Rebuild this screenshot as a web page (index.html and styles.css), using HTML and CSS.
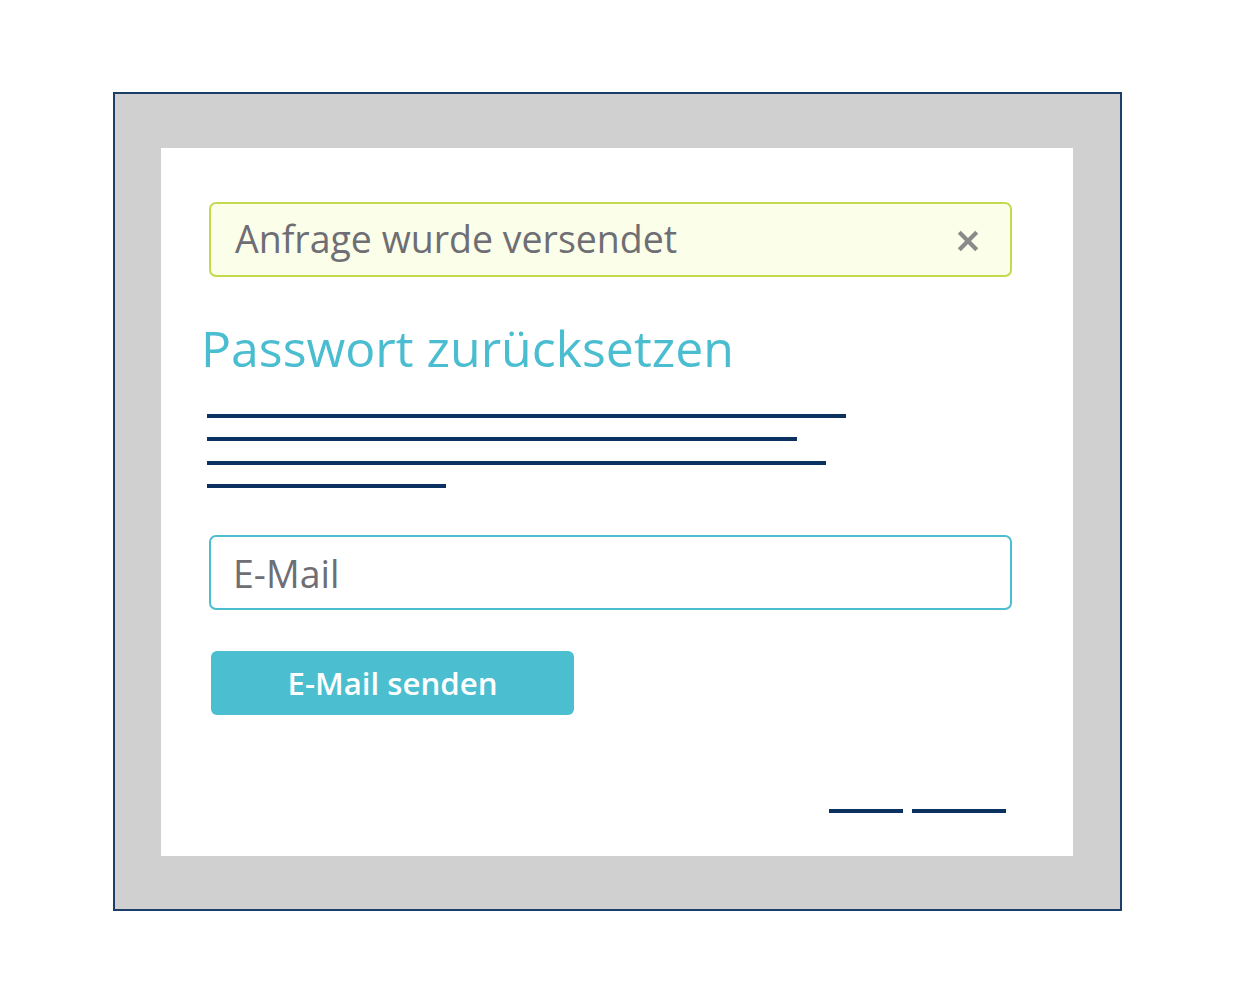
FILE: index.html
```html
<!DOCTYPE html>
<html lang="de">
<head>
<meta charset="utf-8">
<title>Passwort zurücksetzen</title>
<link rel="stylesheet" href="styles.css">
</head>
<body>
<div class="frame">
  <div class="panel">
    <div class="alert">
      <span class="alert-text">Anfrage wurde versendet</span>
      <svg class="close" width="24" height="24" viewBox="0 0 24 24" aria-hidden="true">
        <path d="M2.5 2.5 L21.5 21.5 M21.5 2.5 L2.5 21.5" stroke="#8a8a8a" stroke-width="4.6" fill="none"/>
      </svg>
    </div>
    <h1 class="title">Passwort zurücksetzen</h1>
    <div class="text-lines">
      <div class="tline" style="width:639px"></div>
      <div class="tline" style="width:590px"></div>
      <div class="tline" style="width:619px"></div>
      <div class="tline" style="width:239px"></div>
    </div>
    <input class="email" type="text" placeholder="E-Mail">
    <button class="send" type="button">E-Mail senden</button>
    <div class="footer-links">
      <div class="dash dash-a"></div>
      <div class="dash dash-b"></div>
    </div>
  </div>
</div>
</body>
</html>
```
FILE: styles.css
```css
html, body {
  margin: 0;
  padding: 0;
  background: #ffffff;
}
body {
  font-family: "Open Sans", "Liberation Sans", sans-serif;
  padding-top: 92px;
  padding-left: 113px;
}
.frame {
  box-sizing: border-box;
  width: 1009px;
  height: 819px;
  border: 2px solid #1b3f69;
  background: #d0d0d0;
  padding: 54px 47px 53px 46px;
}
.panel {
  box-sizing: border-box;
  width: 912px;
  height: 708px;
  background: #ffffff;
  padding-top: 54px;
  padding-left: 46px;
  display: flex;
  flex-direction: column;
  align-items: flex-start;
}
.alert {
  box-sizing: border-box;
  width: 803px;
  height: 75px;
  margin-left: 2px;
  border: 2px solid #c4d94c;
  border-radius: 7px;
  background: #fbfee9;
  display: flex;
  align-items: center;
  justify-content: space-between;
  padding: 0 31px 0 24px;
}
.alert-text {
  font-size: 37.5px;
  line-height: 38px;
  color: #6e6e74;
  margin-top: -2px;
}
.close {
  width: 22px;
  height: 22px;
  margin-top: 3px;
}
.title {
  margin: 46px 0 0 -6px;
  font-size: 50px;
  line-height: 50px;
  font-weight: 400;
  color: #4bbdd0;
}
.text-lines {
  margin-top: 41px;
  display: flex;
  flex-direction: column;
  gap: 19.4px;
}
.tline {
  height: 4px;
  background: #0b3160;
}
.email {
  box-sizing: border-box;
  width: 803px;
  height: 75px;
  margin: 47px 0 0 2px;
  border: 2px solid #4dbdd0;
  border-radius: 7px;
  background: #ffffff;
  padding: 2px 0 0 22px;
  font-family: "Open Sans", "Liberation Sans", sans-serif;
  font-size: 37.5px;
  color: #6e6e74;
  outline: none;
}
.email::placeholder {
  color: #6e6e74;
  opacity: 1;
}
.send {
  box-sizing: border-box;
  width: 363px;
  height: 64px;
  margin: 41px 0 0 4px;
  border: none;
  border-radius: 6px;
  background: #4bbecf;
  color: #ffffff;
  font-family: "Open Sans", "Liberation Sans", sans-serif;
  font-size: 31.2px;
  font-weight: 600;
  padding: 0;
}
.footer-links {
  align-self: flex-end;
  margin-top: 94px;
  margin-right: 67px;
  display: flex;
  gap: 9px;
}
.dash {
  height: 4px;
  background: #0b3160;
}
.dash-a { width: 74px; }
.dash-b { width: 94px; }
```
